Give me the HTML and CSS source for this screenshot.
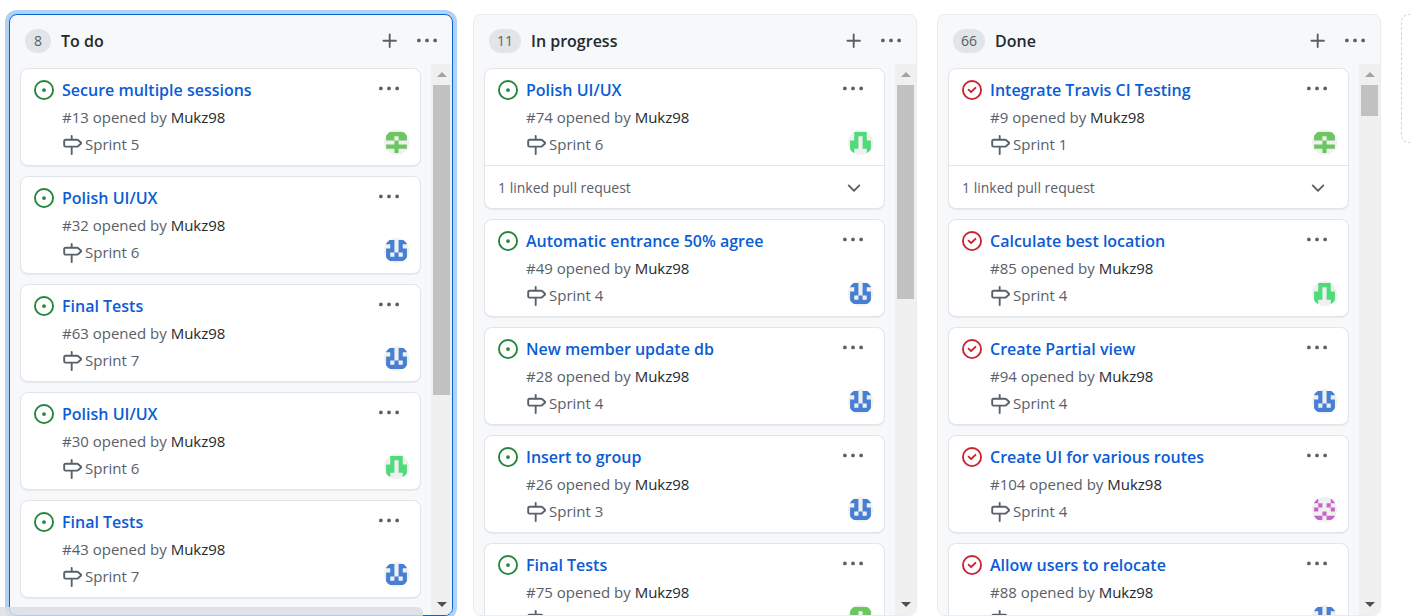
FILE: index.html
```html
<!DOCTYPE html>
<html lang="en">
<head>
<meta charset="utf-8">
<title>Project board</title>
<link rel="stylesheet" href="styles.css">
</head>
<body>
<svg class="sprite" aria-hidden="true">
  <symbol id="open" viewBox="0 0 16 16"><path d="M8 9.5a1.5 1.5 0 100-3 1.5 1.5 0 000 3z"/><path fill-rule="evenodd" d="M8 0a8 8 0 100 16A8 8 0 008 0zM1.5 8a6.5 6.5 0 1113 0 6.5 6.5 0 01-13 0z"/></symbol>
  <symbol id="closed" viewBox="0 0 16 16"><path d="M11.28 6.78a.75.75 0 00-1.06-1.06L7.25 8.69 5.78 7.22a.75.75 0 00-1.06 1.06l2 2a.75.75 0 001.06 0l3.5-3.5z"/><path fill-rule="evenodd" d="M16 8A8 8 0 110 8a8 8 0 0116 0zm-1.5 0a6.5 6.5 0 11-13 0 6.5 6.5 0 0113 0z"/></symbol>
  <symbol id="milestone" viewBox="0 0 16 16"><path fill-rule="evenodd" d="M7.75 0a.75.75 0 01.75.75V3h3.634c.414 0 .814.147 1.13.414l2.07 1.75a1.75 1.75 0 010 2.672l-2.07 1.75a1.75 1.75 0 01-1.13.414H8.5v5.25a.75.75 0 11-1.5 0V10H2.75A1.75 1.75 0 011 8.25v-3.5C1 3.784 1.784 3 2.75 3H7V.75A.75.75 0 017.75 0zm0 8.5h4.384a.25.25 0 00.161-.06l2.07-1.75a.25.25 0 000-.38l-2.07-1.75a.25.25 0 00-.161-.06H2.75a.25.25 0 00-.25.25v3.5c0 .138.112.25.25.25h5z"/></symbol>
  <symbol id="plus" viewBox="0 0 16 16"><path d="M7.75 2a.75.75 0 01.75.75V7h4.25a.75.75 0 110 1.5H8.5v4.25a.75.75 0 11-1.5 0V8.5H2.75a.75.75 0 010-1.5H7V2.75A.75.75 0 017.75 2z"/></symbol>
  <symbol id="dots" viewBox="0 0 16 16"><circle cx="1.5" cy="7.5" r="1.5"/><circle cx="8" cy="7.5" r="1.5"/><circle cx="14.5" cy="7.5" r="1.5"/></symbol>
  <symbol id="chevron" viewBox="0 0 16 16"><path d="M12.78 6.22a.75.75 0 010 1.06l-4.25 4.25a.75.75 0 01-1.06 0L3.22 7.28a.75.75 0 011.06-1.06L8 9.94l3.72-3.72a.75.75 0 011.06 0z"/></symbol>
  <symbol id="av-cross" viewBox="0 0 12 12"><path fill="#6cc763" d="M1 1h10v4H7V3H5v2H1zM5 5h2v2h4v2H7v2H5V9H1V7h4z"/></symbol>
  <symbol id="av-blue" viewBox="0 0 12 12"><path fill="#467fd3" fill-rule="evenodd" d="M1 1h4v6h2V1h4v2H9v2h2v6H1V5h2V3H1zM3 7v2h2V7zM7 7v2h2V7z"/></symbol>
  <symbol id="av-arch" viewBox="0 0 12 12"><path fill="#4edb79" d="M3 1h6v4h2v6H9V9H7V3H5v6H3v2H1V5h2z"/></symbol>
  <symbol id="av-pink" viewBox="0 0 12 12"><path fill="#c764cb" d="M1 1h2v2H1zM9 1h2v2H9zM3 3h2v2H3zM7 3h2v2H7zM1 5h2v2H1zM9 5h2v2H9zM5 7h2v2H5zM1 9h4v2H1zM7 9h4v2H7z"/></symbol>
</svg>
<main class="board">
  <section class="column column-focused" tabindex="0">
    <header class="column-header"><span class="count">8</span><h2 class="column-title">To do</h2>
      <button class="icon-button" aria-label="Add a card"><svg class="icon"><use href="#plus"/></svg></button>
      <button class="icon-button" aria-label="Column menu"><svg class="icon"><use href="#dots"/></svg></button></header>
    <div class="column-body">
      <div class="cards">
        <article class="card"><div class="card-main"><svg class="icon open"><use href="#open"/></svg><div class="details"><a class="title" href="#">Secure multiple sessions</a><p class="meta">#13 opened by <a class="user" href="#">Mukz98</a></p><p class="milestone"><svg class="icon"><use href="#milestone"/></svg>Sprint 5</p></div><div class="side"><button class="icon-button" aria-label="Card menu"><svg class="icon"><use href="#dots"/></svg></button><svg class="avatar"><use href="#av-cross"/></svg></div></div></article>
        <article class="card"><div class="card-main"><svg class="icon open"><use href="#open"/></svg><div class="details"><a class="title" href="#">Polish UI/UX</a><p class="meta">#32 opened by <a class="user" href="#">Mukz98</a></p><p class="milestone"><svg class="icon"><use href="#milestone"/></svg>Sprint 6</p></div><div class="side"><button class="icon-button" aria-label="Card menu"><svg class="icon"><use href="#dots"/></svg></button><svg class="avatar"><use href="#av-blue"/></svg></div></div></article>
        <article class="card"><div class="card-main"><svg class="icon open"><use href="#open"/></svg><div class="details"><a class="title" href="#">Final Tests</a><p class="meta">#63 opened by <a class="user" href="#">Mukz98</a></p><p class="milestone"><svg class="icon"><use href="#milestone"/></svg>Sprint 7</p></div><div class="side"><button class="icon-button" aria-label="Card menu"><svg class="icon"><use href="#dots"/></svg></button><svg class="avatar"><use href="#av-blue"/></svg></div></div></article>
        <article class="card"><div class="card-main"><svg class="icon open"><use href="#open"/></svg><div class="details"><a class="title" href="#">Polish UI/UX</a><p class="meta">#30 opened by <a class="user" href="#">Mukz98</a></p><p class="milestone"><svg class="icon"><use href="#milestone"/></svg>Sprint 6</p></div><div class="side"><button class="icon-button" aria-label="Card menu"><svg class="icon"><use href="#dots"/></svg></button><svg class="avatar"><use href="#av-arch"/></svg></div></div></article>
        <article class="card"><div class="card-main"><svg class="icon open"><use href="#open"/></svg><div class="details"><a class="title" href="#">Final Tests</a><p class="meta">#43 opened by <a class="user" href="#">Mukz98</a></p><p class="milestone"><svg class="icon"><use href="#milestone"/></svg>Sprint 7</p></div><div class="side"><button class="icon-button" aria-label="Card menu"><svg class="icon"><use href="#dots"/></svg></button><svg class="avatar"><use href="#av-blue"/></svg></div></div></article>
        <article class="card"><div class="card-main"></div></article>
      </div>
      <div class="scrollbar" aria-hidden="true"><span class="arrow-up"></span><span class="track"><span class="thumb" style="height:61%"></span></span><span class="arrow-down"></span></div>
    </div>
  </section>
  <section class="column">
    <header class="column-header"><span class="count">11</span><h2 class="column-title">In progress</h2>
      <button class="icon-button" aria-label="Add a card"><svg class="icon"><use href="#plus"/></svg></button>
      <button class="icon-button" aria-label="Column menu"><svg class="icon"><use href="#dots"/></svg></button></header>
    <div class="column-body">
      <div class="cards">
        <article class="card"><div class="card-main"><svg class="icon open"><use href="#open"/></svg><div class="details"><a class="title" href="#">Polish UI/UX</a><p class="meta">#74 opened by <a class="user" href="#">Mukz98</a></p><p class="milestone"><svg class="icon"><use href="#milestone"/></svg>Sprint 6</p></div><div class="side"><button class="icon-button" aria-label="Card menu"><svg class="icon"><use href="#dots"/></svg></button><svg class="avatar"><use href="#av-arch"/></svg></div></div><button class="linked">1 linked pull request<svg class="icon"><use href="#chevron"/></svg></button></article>
        <article class="card"><div class="card-main"><svg class="icon open"><use href="#open"/></svg><div class="details"><a class="title" href="#">Automatic entrance 50% agree</a><p class="meta">#49 opened by <a class="user" href="#">Mukz98</a></p><p class="milestone"><svg class="icon"><use href="#milestone"/></svg>Sprint 4</p></div><div class="side"><button class="icon-button" aria-label="Card menu"><svg class="icon"><use href="#dots"/></svg></button><svg class="avatar"><use href="#av-blue"/></svg></div></div></article>
        <article class="card"><div class="card-main"><svg class="icon open"><use href="#open"/></svg><div class="details"><a class="title" href="#">New member update db</a><p class="meta">#28 opened by <a class="user" href="#">Mukz98</a></p><p class="milestone"><svg class="icon"><use href="#milestone"/></svg>Sprint 4</p></div><div class="side"><button class="icon-button" aria-label="Card menu"><svg class="icon"><use href="#dots"/></svg></button><svg class="avatar"><use href="#av-blue"/></svg></div></div></article>
        <article class="card"><div class="card-main"><svg class="icon open"><use href="#open"/></svg><div class="details"><a class="title" href="#">Insert to group</a><p class="meta">#26 opened by <a class="user" href="#">Mukz98</a></p><p class="milestone"><svg class="icon"><use href="#milestone"/></svg>Sprint 3</p></div><div class="side"><button class="icon-button" aria-label="Card menu"><svg class="icon"><use href="#dots"/></svg></button><svg class="avatar"><use href="#av-blue"/></svg></div></div></article>
        <article class="card"><div class="card-main"><svg class="icon open"><use href="#open"/></svg><div class="details"><a class="title" href="#">Final Tests</a><p class="meta">#75 opened by <a class="user" href="#">Mukz98</a></p><p class="milestone"><svg class="icon"><use href="#milestone"/></svg>Sprint 7</p></div><div class="side"><button class="icon-button" aria-label="Card menu"><svg class="icon"><use href="#dots"/></svg></button><svg class="avatar"><use href="#av-cross"/></svg></div></div></article>
      </div>
      <div class="scrollbar" aria-hidden="true"><span class="arrow-up"></span><span class="track"><span class="thumb" style="height:42%"></span></span><span class="arrow-down"></span></div>
    </div>
  </section>
  <section class="column">
    <header class="column-header"><span class="count">66</span><h2 class="column-title">Done</h2>
      <button class="icon-button" aria-label="Add a card"><svg class="icon"><use href="#plus"/></svg></button>
      <button class="icon-button" aria-label="Column menu"><svg class="icon"><use href="#dots"/></svg></button></header>
    <div class="column-body">
      <div class="cards">
        <article class="card"><div class="card-main"><svg class="icon closed"><use href="#closed"/></svg><div class="details"><a class="title" href="#">Integrate Travis CI Testing</a><p class="meta">#9 opened by <a class="user" href="#">Mukz98</a></p><p class="milestone"><svg class="icon"><use href="#milestone"/></svg>Sprint 1</p></div><div class="side"><button class="icon-button" aria-label="Card menu"><svg class="icon"><use href="#dots"/></svg></button><svg class="avatar"><use href="#av-cross"/></svg></div></div><button class="linked">1 linked pull request<svg class="icon"><use href="#chevron"/></svg></button></article>
        <article class="card"><div class="card-main"><svg class="icon closed"><use href="#closed"/></svg><div class="details"><a class="title" href="#">Calculate best location</a><p class="meta">#85 opened by <a class="user" href="#">Mukz98</a></p><p class="milestone"><svg class="icon"><use href="#milestone"/></svg>Sprint 4</p></div><div class="side"><button class="icon-button" aria-label="Card menu"><svg class="icon"><use href="#dots"/></svg></button><svg class="avatar"><use href="#av-arch"/></svg></div></div></article>
        <article class="card"><div class="card-main"><svg class="icon closed"><use href="#closed"/></svg><div class="details"><a class="title" href="#">Create Partial view</a><p class="meta">#94 opened by <a class="user" href="#">Mukz98</a></p><p class="milestone"><svg class="icon"><use href="#milestone"/></svg>Sprint 4</p></div><div class="side"><button class="icon-button" aria-label="Card menu"><svg class="icon"><use href="#dots"/></svg></button><svg class="avatar"><use href="#av-blue"/></svg></div></div></article>
        <article class="card"><div class="card-main"><svg class="icon closed"><use href="#closed"/></svg><div class="details"><a class="title" href="#">Create UI for various routes</a><p class="meta">#104 opened by <a class="user" href="#">Mukz98</a></p><p class="milestone"><svg class="icon"><use href="#milestone"/></svg>Sprint 4</p></div><div class="side"><button class="icon-button" aria-label="Card menu"><svg class="icon"><use href="#dots"/></svg></button><svg class="avatar"><use href="#av-pink"/></svg></div></div></article>
        <article class="card"><div class="card-main"><svg class="icon closed"><use href="#closed"/></svg><div class="details"><a class="title" href="#">Allow users to relocate</a><p class="meta">#88 opened by <a class="user" href="#">Mukz98</a></p><p class="milestone"><svg class="icon"><use href="#milestone"/></svg>Sprint 5</p></div><div class="side"><button class="icon-button" aria-label="Card menu"><svg class="icon"><use href="#dots"/></svg></button><svg class="avatar"><use href="#av-blue"/></svg></div></div></article>
      </div>
      <div class="scrollbar" aria-hidden="true"><span class="arrow-up"></span><span class="track"><span class="thumb" style="height:6%"></span></span><span class="arrow-down"></span></div>
    </div>
  </section>
  <div class="new-column"></div>
</main>
<div class="status-bar"></div>
</body>
</html>
```
FILE: styles.css
```css
* { box-sizing: border-box; }
body {
  margin: 0;
  overflow: hidden;
  background: #fff;
  color: #24292e;
  font: 15px/27px "Segoe UI", "Open Sans", "Noto Sans", sans-serif;
}
p, h2 { margin: 0; }
a { text-decoration: none; }
button {
  border: 0;
  padding: 0;
  background: none;
  color: #586069;
  font: inherit;
}
.sprite { display: none; }
.icon {
  display: block;
  flex: none;
  width: 20px;
  height: 20px;
  fill: currentColor;
}
.board {
  display: flex;
  gap: 20px;
  height: 100vh;
  padding: 14px 0 0 9px;
}
.column {
  display: flex;
  flex: 1 1 0;
  flex-direction: column;
  min-width: 0;
  overflow: hidden;
  border: 1px solid #eaecef;
  border-radius: 8px;
  background: #f6f8fa;
  outline: 0;
}
.column-focused {
  border-color: #0366d6;
  box-shadow: 0 0 0 4px rgba(3, 102, 214, .3);
}
.column-header {
  display: flex;
  flex: none;
  align-items: center;
  gap: 17px;
  height: 49px;
  padding: 3px 15px 0;
}
.count {
  min-width: 26px;
  margin-right: -7px;
  padding: 0 8px;
  border-radius: 12px;
  background: #e1e5e8;
  color: #586069;
  font-size: 14px;
  line-height: 24px;
  text-align: center;
}
.column-title {
  flex: 1;
  font-size: 16px;
  font-weight: 600;
}
.column-body {
  display: flex;
  flex: 1;
  min-height: 0;
}
.cards {
  display: flex;
  flex: 1;
  flex-direction: column;
  gap: 10px;
  min-width: 0;
  overflow: hidden;
  padding: 4px 10px 0;
}
.card {
  flex: none;
  border: 1px solid #e1e4e8;
  border-radius: 8px;
  background: #fff;
  box-shadow: 0 1px 1px rgba(149, 157, 165, .15);
}
.card-main {
  display: flex;
  align-items: flex-start;
  min-height: 96px;
  padding: 8px 11px 7px 13px;
}
.card-main > .icon { margin-top: 3px; }
.open { color: #22863a; }
.closed { color: #cb2431; }
.details {
  flex: 1;
  min-width: 0;
  padding-left: 8px;
}
.title {
  display: block;
  color: #0b5cd5;
  font-size: 16px;
  font-weight: 600;
}
.meta { color: #586069; }
.user { color: #24292e; }
.milestone {
  display: flex;
  align-items: center;
  gap: 3px;
  color: #586069;
}
.side {
  display: flex;
  flex-direction: column;
  align-items: flex-end;
  gap: 31px;
  padding-top: 2px;
}
.side .icon-button { margin-right: 10px; }
.avatar {
  display: block;
  width: 25px;
  height: 25px;
  border-radius: 50%;
  background: #f0f0f0;
}
.linked {
  display: flex;
  align-items: center;
  justify-content: space-between;
  width: 100%;
  height: 43px;
  padding: 0 20px 0 13px;
  border-top: 1px solid #e1e4e8;
  font-size: 14px;
}
.scrollbar {
  display: flex;
  flex: none;
  flex-direction: column;
  align-items: center;
  justify-content: space-between;
  width: 21px;
  background: #f0f0f0;
}
.arrow-up, .arrow-down {
  flex: none;
  width: 0;
  margin: 8px 0;
  border: 5px solid transparent;
}
.arrow-up { border-top: 0; border-bottom-color: #a3a3a3; }
.arrow-down { border-bottom: 0; border-top-color: #505050; }
.track {
  flex: 1;
  width: 17px;
}
.thumb {
  display: block;
  background: #c1c1c1;
}
.new-column {
  flex: 0 0 9px;
  height: 129px;
  border: 1px dashed #d1d5da;
  border-right: 0;
  border-radius: 8px 0 0 8px;
}
.status-bar {
  position: fixed;
  bottom: 0;
  left: 0;
  width: 30%;
  height: 9px;
  border-radius: 0 6px 0 0;
  background: rgba(218, 222, 227, .85);
}
```
